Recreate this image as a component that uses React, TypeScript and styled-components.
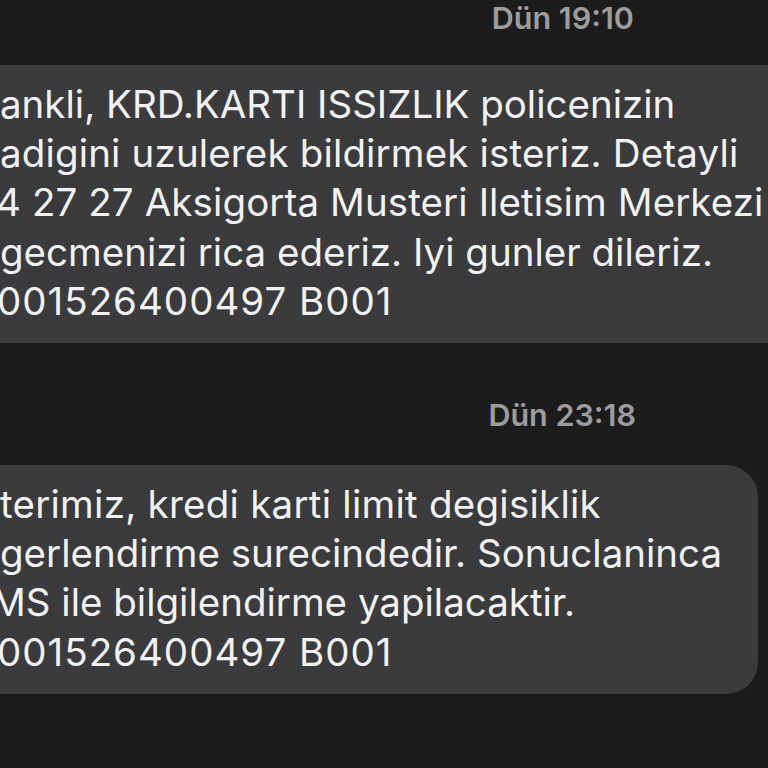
import React from 'react';
import styled, { createGlobalStyle } from 'styled-components';

const GlobalStyle = createGlobalStyle`
    html, body {
        margin: 0;
        padding: 0;
        background: #1c1c1c;
    }
    body {
        font-family: Inter, "Noto Sans", "Liberation Sans", sans-serif;
        -webkit-font-smoothing: antialiased;
    }
`;

const Screen = styled.div`
    width: 768px;
    height: 768px;
    overflow: hidden;
    background: #1c1c1c;
    display: flex;
    flex-direction: column;
`;

const Stamp = styled.div<{ $right: number; $top: number }>`
    margin-top: ${(p) => p.$top}px;
    padding-right: ${(p) => p.$right}px;
    text-align: right;
    color: #9d9d9f;
    font-size: 30.5px;
    font-weight: 600;
    line-height: 36px;
`;

const Bubble = styled.div<{ $width: number; $top: number }>`
    margin-top: ${(p) => p.$top}px;
    margin-left: -40px;
    width: ${(p) => p.$width}px;
    box-sizing: border-box;
    padding: 15px 0 17px 40px;
    background: #3b3b3d;
    border-radius: 32px;
    color: #f2f2f4;
    font-size: 38.5px;
    line-height: 49.2px;
    flex-shrink: 0;
`;

const Line = styled.div<{ $shift?: number; $track?: number }>`
    white-space: nowrap;
    margin-left: ${(p) => p.$shift ?? 0}px;
    letter-spacing: ${(p) => p.$track ?? 0}px;
`;

type Row = { text: string; shift?: number; track?: number };

const first: Row[] = [
    { text: 'ankli, KRD.KARTI ISSIZLIK policenizin' },
    { text: 'adigini uzulerek bildirmek isteriz. Detayli', track: 0.15 },
    { text: '4 27 27 Aksigorta Musteri Iletisim Merkezi', shift: -4, track: 0.1 },
    { text: 'gecmenizi rica ederiz. Iyi gunler dileriz.' },
    { text: '001526400497 B001', shift: -3, track: 1 },
];

const second: Row[] = [
    { text: 'terimiz, kredi karti limit degisiklik', track: 0.25 },
    { text: 'gerlendirme surecindedir. Sonuclaninca' },
    { text: 'MS ile bilgilendirme yapilacaktir.', shift: -9 },
    { text: '001526400497 B001', shift: -3, track: 1 },
];

const Messages = ({ rows }: { rows: Row[] }) => (
    <>
        {rows.map((l) => (
            <Line key={l.text} $shift={l.shift} $track={l.track}>
                {l.text}
            </Line>
        ))}
    </>
);

const App = () => {
    return (
        <>
            <GlobalStyle />
            <Screen>
                <Stamp $top={0} $right={134}>
                    Dün 19:10
                </Stamp>
                <Bubble $top={29} $width={865}>
                    <Messages rows={first} />
                </Bubble>
                <Stamp $top={54} $right={132}>
                    Dün 23:18
                </Stamp>
                <Bubble $top={32} $width={798}>
                    <Messages rows={second} />
                </Bubble>
            </Screen>
        </>
    );
};

export default App;
